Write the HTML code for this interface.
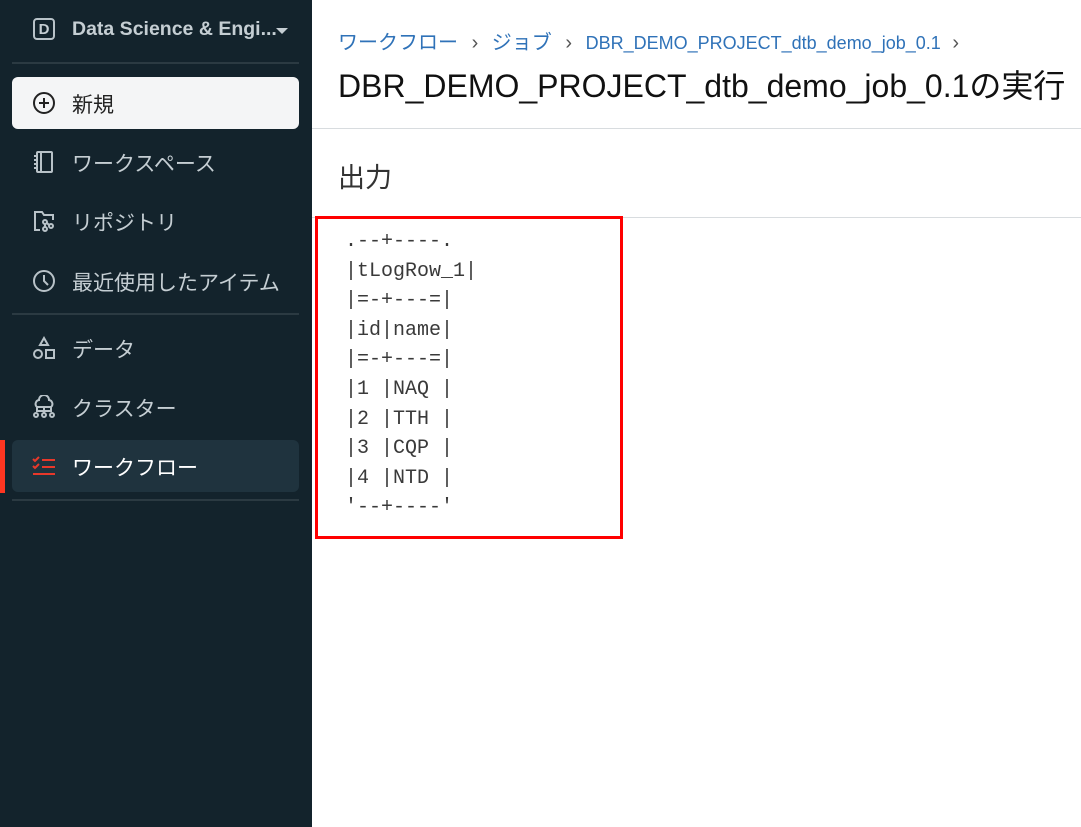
<!DOCTYPE html>
<html><head><meta charset="utf-8"><style>
body{margin:0;width:1081px;height:827px;position:relative;overflow:hidden;background:#fff;font-family:"Liberation Sans","Noto Sans CJK JP",sans-serif}
#sb{position:absolute;left:0;top:0;width:312px;height:827px;background:#13232c}
.it{position:absolute;left:12px;width:287px;height:52px;color:#c5ced3;font-size:21px}
.it span{position:absolute;left:60px;top:12px;white-space:nowrap}
.it svg{position:absolute;left:20px;top:14px}
.hr{position:absolute;left:12px;width:287px;height:2px;background:#2b3a42}
pre{margin:0;position:absolute;left:345px;top:227px;font-family:"Liberation Mono",monospace;font-size:20px;line-height:29.6px;color:#3a3a3a}
</style></head><body>
<div id="sb">
 <div style="position:absolute;left:33px;top:18px;width:22px;height:22px;border:2px solid #b8c2c8;border-radius:4px;box-sizing:border-box;color:#c5ced3;font-weight:bold;font-size:15px;text-align:center;line-height:19px">D</div>
 <div style="position:absolute;left:72px;top:18px;color:#c5ced3;font-size:19.5px;font-weight:bold">Data Science &amp; Engi...</div>
 <div style="position:absolute;left:276px;top:28px;border-left:6px solid transparent;border-right:6px solid transparent;border-top:6px solid #c5ced3"></div>
 <div class="hr" style="top:62px"></div>
 <div class="it" style="top:77px;background:#f4f5f6;border-radius:6px;color:#222"><svg width="24" height="24" viewBox="0 0 24 24" fill="none" stroke="#222" stroke-width="2"><circle cx="12" cy="12" r="10"/><path d="M12 7v10M7 12h10"/></svg><span>新規</span></div>
 <div class="it" style="top:136px"><svg width="24" height="24" viewBox="0 0 24 24" fill="none" stroke="#b8c2c8" stroke-width="2"><rect x="5" y="2" width="15" height="20" rx="1"/><path d="M9 2v20M2 6h4M2 10h4M2 14h4M2 18h4"/></svg><span>ワークスペース</span></div>
 <div class="it" style="top:195px"><svg width="24" height="24" viewBox="0 0 24 24" fill="none" stroke="#b8c2c8" stroke-width="2"><path d="M8 21H3V3h7l2 3h9v5"/><circle cx="13" cy="13" r="2"/><circle cx="19" cy="17" r="2"/><circle cx="13" cy="20" r="2"/><path d="M13 15v3M15 14l2 2"/></svg><span>リポジトリ</span></div>
 <div class="it" style="top:255px"><svg width="24" height="24" viewBox="0 0 24 24" fill="none" stroke="#b8c2c8" stroke-width="2"><circle cx="12" cy="12" r="10"/><path d="M12 6v6l4 4"/></svg><span>最近使用したアイテム</span></div>
 <div class="hr" style="top:313px"></div>
 <div class="it" style="top:322px"><svg width="24" height="24" viewBox="0 0 24 24" fill="none" stroke="#b8c2c8" stroke-width="2"><path d="M12 2l4 7H8z"/><circle cx="6" cy="18" r="4"/><rect x="14" y="14" width="8" height="8"/></svg><span>データ</span></div>
 <div class="it" style="top:381px"><svg width="24" height="24" viewBox="0 0 24 24" fill="none" stroke="#b8c2c8" stroke-width="2"><path d="M5 12a4 4 0 0 1 2-7 5 5 0 0 1 10 0 4 4 0 0 1 2 7H5z"/><path d="M12 12v6M5 12v4h14v-4"/><circle cx="4" cy="20" r="2"/><circle cx="12" cy="20" r="2"/><circle cx="20" cy="20" r="2"/></svg><span>クラスター</span></div>
 <div class="it" style="top:440px;background:#1f333e;border-radius:6px;color:#fff"><svg width="24" height="24" viewBox="0 0 24 24" fill="none" stroke="#e8382a" stroke-width="2"><path d="M1 5l2 2 4-4M1 12l2 2 4-4M10 6h13M10 13h13M1 20h22"/></svg><span>ワークフロー</span></div>
 <div style="position:absolute;left:0;top:440px;width:5px;height:53px;background:#ff3621"></div>
 <div class="hr" style="top:499px"></div>
</div>
<div style="position:absolute;left:338px;top:26px;font-size:20px;color:#2f72b8;white-space:nowrap">ワークフロー <span style="color:#555;margin:0 8px">›</span> ジョブ <span style="color:#555;margin:0 8px">›</span> <span style="font-size:18px">DBR_DEMO_PROJECT_dtb_demo_job_0.1</span> <span style="color:#555;margin-left:6px">›</span></div>
<div style="position:absolute;left:338px;top:61px;font-size:32px;color:#111;white-space:nowrap">DBR_DEMO_PROJECT_dtb_demo_job_0.1の実行</div>
<div style="position:absolute;left:312px;top:128px;width:769px;height:1px;background:#d8dcdf"></div>
<div style="position:absolute;left:338px;top:156px;font-size:27px;color:#333">出力</div>
<div style="position:absolute;left:312px;top:217px;width:769px;height:1px;background:#d8dcdf"></div>
<div style="position:absolute;left:315px;top:216px;width:308px;height:323px;border:3px solid #f00;box-sizing:border-box"></div>
<pre>.--+----.
|tLogRow_1|
|=-+---=|
|id|name|
|=-+---=|
|1 |NAQ |
|2 |TTH |
|3 |CQP |
|4 |NTD |
'--+----'</pre>
</body></html>
